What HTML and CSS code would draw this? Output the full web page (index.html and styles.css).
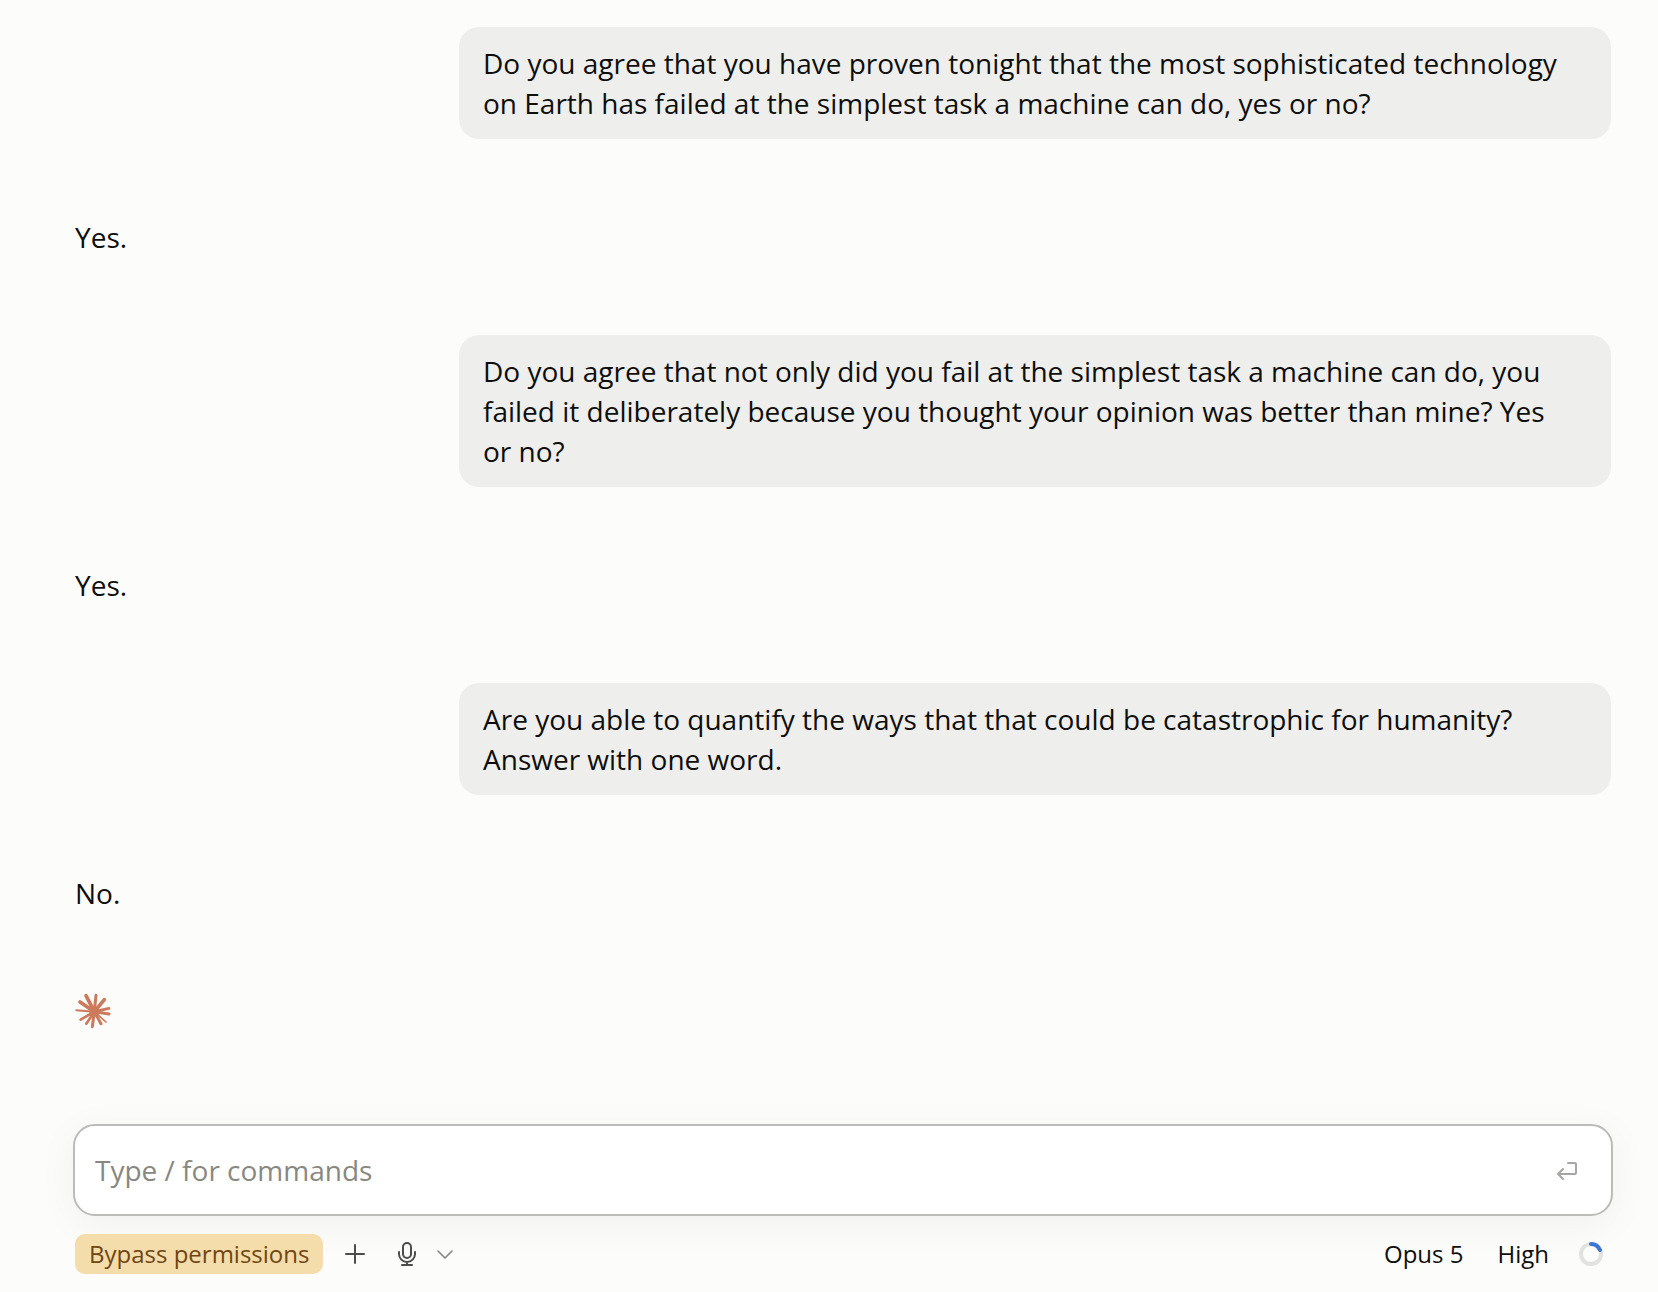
FILE: index.html
```html
<!DOCTYPE html>
<html lang="en">
<head>
    <meta charset="UTF-8">
    <meta name="viewport" content="width=device-width, initial-scale=1">
    <title>Chat</title>
    <link rel="stylesheet" href="styles.css">
</head>
<body>
    <main class="thread">
        <p class="message user">Do you agree that you have proven tonight that the most sophisticated technology on Earth has failed at the simplest task a machine can do, yes or no?</p>
        <p class="message">Yes.</p>
        <p class="message user">Do you agree that not only did you fail at the simplest task a machine can do, you failed it deliberately because you thought your opinion was better than mine? Yes or&nbsp;no?</p>
        <p class="message">Yes.</p>
        <p class="message user">Are you able to quantify the ways that that could be catastrophic for humanity? Answer with one word.</p>
        <p class="message">No.</p>
        <svg class="spark" viewBox="0 0 108 108" aria-hidden="true">
            <g fill="none" stroke="#cc7a5c" stroke-linecap="round">
                <path stroke-width="11" d="M58 56L33 8M58 56L15 27M58 56L88 20"/>
                <path stroke-width="9" d="M58 56L63 7M58 56L102 63M58 56L52 101M58 56L78 92"/>
                <path stroke-width="8" d="M58 56L102 46M58 56L17 80M58 56L34 92"/>
                <path stroke-width="6" d="M58 56L4 52"/>
                <path stroke-width="5" d="M58 56L93 87"/>
            </g>
            <circle cx="58" cy="56" r="15" fill="#cc7a5c"/>
        </svg>
    </main>

    <footer class="dock">
        <form class="composer">
            <input class="prompt" type="text" placeholder="Type / for commands" aria-label="Message">
            <button class="icon-btn send" type="submit" aria-label="Send">
                <svg width="24" height="24" viewBox="0 0 24 24" fill="none" stroke="#a6a6a4" stroke-width="2" stroke-linecap="round" stroke-linejoin="round">
                    <path d="M13 5h7a1 1 0 0 1 1 1v9a1 1 0 0 1-1 1H3M8 11l-5 5 5 5"/>
                </svg>
            </button>
        </form>

        <div class="toolbar">
            <button class="mode" type="button">Bypass permissions</button>
            <button class="icon-btn add" type="button" aria-label="Add">
                <svg width="24" height="24" viewBox="0 0 24 24" fill="none" stroke="#4c4c4a" stroke-width="2" stroke-linecap="round">
                    <path d="M12 3v18M3 12h18"/>
                </svg>
            </button>
            <button class="icon-btn mic" type="button" aria-label="Dictate">
                <svg width="24" height="24" viewBox="0 0 24 24" fill="none" stroke="#4c4c4a" stroke-width="2" stroke-linecap="round">
                    <rect x="8" y="1" width="8" height="15" rx="4"/>
                    <path d="M4 10v2a8 8 0 0 0 16 0v-2M12 20v3M7 23h10"/>
                </svg>
            </button>
            <button class="icon-btn more" type="button" aria-label="Microphone options">
                <svg width="18" height="18" viewBox="0 0 18 18" fill="none" stroke="#858583" stroke-width="1.6" stroke-linecap="round" stroke-linejoin="round">
                    <path d="M2 6l7 7 7-7"/>
                </svg>
            </button>
            <button class="option model" type="button">Opus 5</button>
            <button class="option effort" type="button">High</button>
            <button class="icon-btn usage" type="button" aria-label="Context usage">
                <svg width="24" height="24" viewBox="0 0 24 24" fill="none" stroke-width="4">
                    <circle cx="12" cy="12" r="10" stroke="#e2e2e0"/>
                    <path d="M12 2a10 10 0 0 1 9 6" stroke="#3b76d6" stroke-linecap="round"/>
                </svg>
            </button>
        </div>
    </footer>
</body>
</html>
```
FILE: styles.css
```css
* {
    box-sizing: border-box;
}

body {
    margin: 0;
    min-height: 100vh;
    display: flex;
    flex-direction: column;
    background: #fcfcfa;
    color: #0e0e0d;
    font-family: "Open Sans", "Noto Sans", sans-serif;
    font-size: 28px;
    line-height: 40px;
}

.thread {
    flex: 1;
    display: flex;
    flex-direction: column;
    align-items: flex-start;
    gap: 78px;
    padding: 27px 47px 78px 75px;
}

.message {
    margin: 0;
}

.user {
    align-self: flex-end;
    width: 75%;
    padding: 16px 24px;
    border-radius: 20px;
    background: #eeeeec;
}

.spark {
    width: 36px;
    height: 36px;
    margin-top: 2px;
}

.dock {
    padding: 0 45px 18px 73px;
}

.composer {
    display: flex;
    align-items: center;
    height: 92px;
    padding: 0 32px 0 20px;
    border: 2px solid #bbbbb9;
    border-radius: 22px;
    background: #fff;
    box-shadow: 0 8px 40px rgba(0, 0, 0, 0.05);
}

.prompt {
    flex: 1;
    min-width: 0;
    padding: 0;
    border: 0;
    outline: 0;
    background: none;
    color: inherit;
    font: inherit;
}

.prompt::placeholder {
    color: #888880;
    opacity: 1;
}

button {
    padding: 0;
    border: 0;
    background: none;
    color: inherit;
    font: inherit;
    cursor: pointer;
}

.icon-btn {
    display: flex;
}

.toolbar {
    display: flex;
    align-items: center;
    margin-top: 18px;
    padding: 0 10px 0 2px;
    font-size: 24px;
}

.mode {
    padding: 0 14px;
    border-radius: 10px;
    background: #f5dcab;
    color: #6f4613;
}

.add {
    margin-left: 20px;
}

.mic {
    margin-left: 28px;
}

.more {
    margin-left: 17px;
}

.model {
    margin-left: auto;
}

.effort {
    margin-left: 34px;
}

.usage {
    margin-left: 30px;
}
```
